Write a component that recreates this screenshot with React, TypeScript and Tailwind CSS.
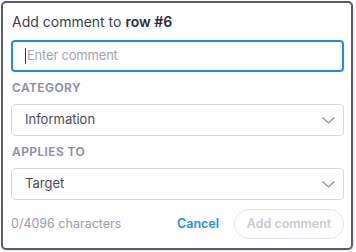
import { ReactNode } from "react";

const Chevron = () => (
  <svg width="13" height="7" viewBox="0 0 13 7" className="shrink-0">
    <polyline
      points="0.5,0.5 6.5,6 12.5,0.5"
      fill="none"
      stroke="#8b8b97"
      strokeWidth="1.2"
    />
  </svg>
);

const Label = ({ children }: { children: ReactNode }) => (
  <div className="mt-2 h-4 text-[12px] leading-4 font-semibold tracking-[0.4px] text-[#8d8c9b] uppercase pl-px">
    {children}
  </div>
);

const Select = ({ value }: { value: string }) => (
  <div className="mt-2 h-8 flex items-center justify-between rounded-[4px] border border-[#d8d8de] pl-[13px] pr-[8px]">
    <span className="text-[13px] text-[#4a4a5c]">{value}</span>
    <Chevron />
  </div>
);

export default function App() {
  return (
    <div className="p-px font-['Inter',sans-serif]">
      <div className="w-[352px] h-[249px] rounded-[5px] border-2 border-[#5c5877] bg-white pl-2 pr-[7px] pt-[9px] shadow-[1px_1px_2px_rgba(0,0,0,0.12)]">
        <div className="h-5 leading-5 text-[14px] text-[#3d3d4f] pl-px">
          Add comment to <span className="font-semibold text-[#2a2a3b]">row #6</span>
        </div>

        <div className="mt-2 h-8 flex items-center rounded-[4px] border-2 border-[#1c8cf0] pl-[12px]">
          <span className="w-px h-4 bg-[#3b3450] mr-px" />
          <span className="text-[13px] tracking-[-0.2px] text-[#a3a2b0]">Enter comment</span>
        </div>

        <Label>Category</Label>
        <Select value="Information" />

        <Label>Applies to</Label>
        <Select value="Target" />

        <div className="mt-[9px] flex items-center">
          <span className="grow text-[12.5px] text-[#9d9cab]">0/4096 characters</span>
          <button className="text-[12.5px] font-semibold text-[#1c8cf0] mr-[15px]">
            Cancel
          </button>
          <button className="h-[30px] w-[110px] rounded-full border border-[#e4e4ea] text-[12.5px] font-semibold text-[#cacad3]">
            Add comment
          </button>
        </div>
      </div>
    </div>
  );
}
